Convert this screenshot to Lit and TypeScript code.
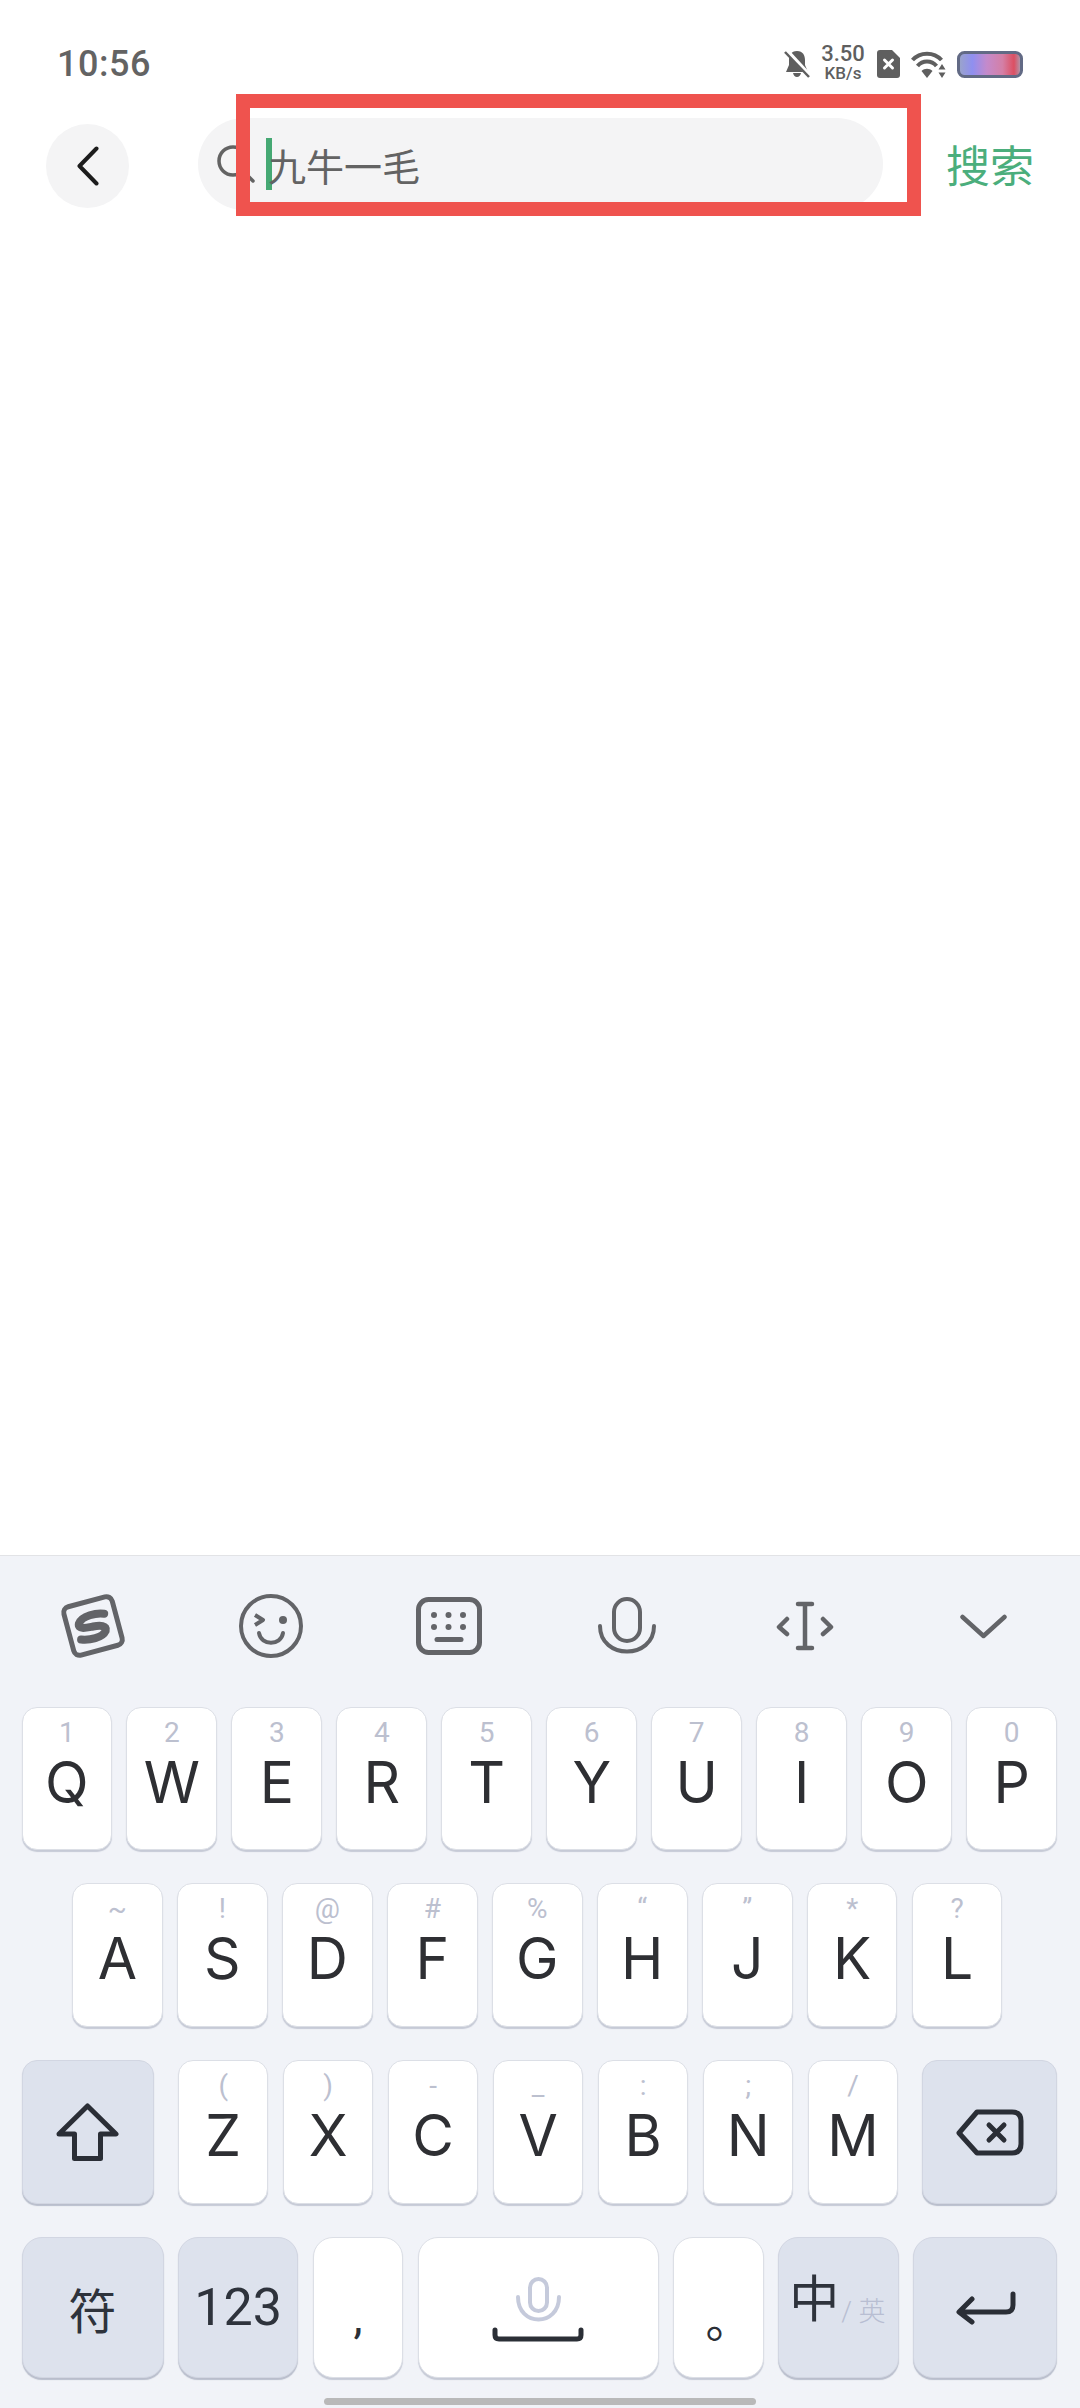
import { LitElement, html, css, svg } from "lit";
import { customElement } from "lit/decorators.js";

const ROW1 = [["Q", "1"], ["W", "2"], ["E", "3"], ["R", "4"], ["T", "5"], ["Y", "6"], ["U", "7"], ["I", "8"], ["O", "9"], ["P", "0"]];
const ROW2 = [["A", "~"], ["S", "!"], ["D", "@"], ["F", "#"], ["G", "%"], ["H", "“"], ["J", "”"], ["K", "*"], ["L", "?"]];
const ROW3 = [["Z", "("], ["X", ")"], ["C", "-"], ["V", "_"], ["B", ":"], ["N", ";"], ["M", "/"]];

const stroke = "#636468";

const icons = {
  logo: svg`<g transform="rotate(-15 33 33)"><rect x="8" y="8" width="50" height="50" rx="6" fill="none" stroke="${stroke}" stroke-width="5"/><path d="M47 24 C40 21 25 20 20 27 C17 33 27 33 33 33.500 C40 34 47 36 44 41 C39 47 26 46 18 43" fill="none" stroke="${stroke}" stroke-width="8" stroke-linecap="round"/></g>`,
  smile: svg`<circle cx="32" cy="32" r="30" fill="none" stroke="${stroke}" stroke-width="4"/><path d="M16 21 L24 26 L16 31" fill="none" stroke="${stroke}" stroke-width="4" stroke-linejoin="round"/><circle cx="44" cy="26" r="4" fill="${stroke}"/><path d="M20 39 C22 52 42 52 44 39" fill="none" stroke="${stroke}" stroke-width="4" stroke-linecap="round"/>`,
  board: svg`<rect x="2.500" y="2.500" width="61" height="53" rx="10" fill="none" stroke="${stroke}" stroke-width="5"/><g fill="${stroke}"><circle cx="18" cy="18" r="3"/><circle cx="32.500" cy="18" r="3"/><circle cx="47" cy="18" r="3"/><circle cx="18" cy="30" r="3"/><circle cx="32.500" cy="30" r="3"/><circle cx="47" cy="30" r="3"/></g><path d="M21 42.500 H45" stroke="${stroke}" stroke-width="5" stroke-linecap="round"/>`,
  mic: svg`<rect x="16" y="2" width="26" height="42" rx="13" fill="none" stroke="${stroke}" stroke-width="4"/><path d="M2 29 C2 63 56 63 56 29" fill="none" stroke="${stroke}" stroke-width="4" stroke-linecap="round"/>`,
  cursor: svg`<path d="M11 18 L3 26 L11 33 M47 18 L55 26 L47 33" fill="none" stroke="${stroke}" stroke-width="4.500" stroke-linecap="round" stroke-linejoin="round"/><path d="M22 3 H36 M29 3 V47 M22 47 H36" fill="none" stroke="${stroke}" stroke-width="4.500" stroke-linecap="round"/>`,
  down: svg`<path d="M2.500 3 L23.500 22 L44.500 3" fill="none" stroke="${stroke}" stroke-width="4.500" stroke-linecap="round" stroke-linejoin="round"/>`,
  shift: svg`<path d="M31.500 3 L60 31 H44.500 V55.500 H18.500 V31 H3 Z" fill="none" stroke="#2a2e36" stroke-width="5" stroke-linejoin="round"/>`,
  del: svg`<path d="M21 3 H56 Q65 3 65 12 V35 Q65 44 56 44 H21 L3 24 Z" fill="none" stroke="#2a2e36" stroke-width="5" stroke-linejoin="round"/><path d="M33 16 L48 31 M48 16 L33 31" stroke="#2a2e36" stroke-width="5" stroke-linecap="round"/>`,
  enter: svg`<path d="M58 3 V14 Q58 21 51 21 H5 M17 8 L4 21 L17 31" fill="none" stroke="#2a2e36" stroke-width="5" stroke-linecap="round" stroke-linejoin="round"/>`,
  spaceMic: svg`<rect x="14" y="2" width="17" height="32" rx="8.500" fill="none" stroke="#c5cadb" stroke-width="4"/><path d="M2 20 C2 50 43 50 43 20" fill="none" stroke="#c5cadb" stroke-width="4" stroke-linecap="round"/>`,
  spaceBar: svg`<path d="M3 3 V8 Q3 12 7 12 H85 Q89 12 89 8 V3" fill="none" stroke="#2b2f36" stroke-width="5" stroke-linecap="round"/>`,
};

@customElement("app-root")
export class AppRoot extends LitElement {
  static styles = css`
    :host {
      display: block;
      font-family: Roboto, "Noto Sans CJK SC", sans-serif;
    }
    .page {
      position: relative;
      width: 1080px;
      height: 2408px;
      background: #fff;
      display: flex;
      flex-direction: column;
      overflow: hidden;
    }
    .status {
      height: 60px;
      margin-top: 34px;
      padding: 0 57px;
      display: flex;
      align-items: center;
      justify-content: space-between;
      flex-shrink: 0;
    }
    .time {
      font-size: 36px;
      font-weight: 500;
      color: #636363;
      letter-spacing: 0.5px;
    }
    .sys {
      display: flex;
      align-items: center;
      color: #5f5f5f;
    }
    .sys svg {
      display: block;
    }
    .speed {
      width: 42px;
      margin: -3px 13px 0 12px;
      display: flex;
      flex-direction: column;
      align-items: center;
    }
    .speed b {
      font-size: 22px;
      font-weight: 500;
      line-height: 21px;
      white-space: nowrap;
    }
    .speed i {
      font-size: 17px;
      font-style: normal;
      font-weight: 500;
      line-height: 19px;
      white-space: nowrap;
    }
    .wifi {
      margin: 0 11px;
    }
    .head {
      height: 92px;
      margin-top: 24px;
      padding-left: 46px;
      display: flex;
      align-items: center;
      flex-shrink: 0;
    }
    .back {
      width: 83px;
      height: 84px;
      margin-top: 4px;
      border-radius: 50%;
      background: #f4f4f5;
      display: flex;
      align-items: center;
      justify-content: center;
    }
    .pill {
      width: 685px;
      height: 92px;
      margin-left: 69px;
      padding-left: 19px;
      box-sizing: border-box;
      border-radius: 46px;
      background: #f4f4f5;
      display: flex;
      align-items: center;
    }
    .pill svg {
      flex-shrink: 0;
    }
    .caret {
      width: 6px;
      height: 52px;
      margin-left: 11px;
      background: #45a873;
      flex-shrink: 0;
    }
    .query {
      margin-left: -4px;
      font-size: 38px;
      font-weight: 400;
      color: #636363;
      white-space: nowrap;
    }
    .go {
      margin-left: 63px;
      font-size: 44px;
      font-weight: 400;
      color: #4bae7c;
      white-space: nowrap;
    }
    .mark {
      position: absolute;
      left: 236px;
      top: 94px;
      width: 685px;
      height: 122px;
      box-sizing: border-box;
      border: 14px solid #ef534e;
    }
    .spacer {
      flex: 1;
    }
    .kb {
      height: 853px;
      box-sizing: border-box;
      flex-shrink: 0;
      background: #f1f3f8;
      border-top: 1px solid #e2e3e6;
      display: flex;
      flex-direction: column;
    }
    .tools {
      height: 140px;
      padding-left: 4px;
      margin-bottom: 11px;
      display: grid;
      grid-template-columns: repeat(6, 178px);
      align-items: center;
      justify-items: center;
      flex-shrink: 0;
    }
    .tools svg {
      display: block;
    }
    .rows {
      display: flex;
      flex-direction: column;
      gap: 33px;
    }
    .row {
      display: flex;
      gap: 14.400px;
      height: 143px;
      padding-left: 21.500px;
    }
    .row.r2 {
      height: 144px;
      padding-left: 72px;
    }
    .row.r3 {
      height: 144px;
    }
    .row.r4 {
      height: 141px;
    }
    .key {
      width: 90.600px;
      height: 100%;
      box-sizing: border-box;
      flex-shrink: 0;
      background: #fff;
      border: 1px solid #dcdfe6;
      border-radius: 15px;
      box-shadow: 0 2px 1px #c6cad6;
      display: flex;
      flex-direction: column;
      align-items: center;
      color: #2e2f33;
    }
    .hint {
      height: 32px;
      margin-top: 9px;
      font-size: 28px;
      line-height: 32px;
      font-weight: 400;
      color: #bcc0cf;
    }
    .cap {
      height: 60px;
      margin-top: 4px;
      font-family: Inter, Roboto, sans-serif;
      font-size: 57px;
      line-height: 60px;
    }
    .fn {
      background: #dde2ed;
      border-color: #d2d6e2;
      box-shadow: 0 2px 1px #b9becc;
      justify-content: center;
      color: #2e333c;
      font-size: 48px;
    }
    .r4 .key {
      border-radius: 20px;
    }
    .gapped {
      margin-right: 10px;
    }
    .shift {
      width: 132px;
    }
    .del {
      width: 135px;
      margin-left: 9.500px;
    }
    .sym {
      width: 142px;
    }
    .num {
      width: 120.500px;
      font-size: 52px;
    }
    .space {
      width: 241px;
      justify-content: flex-start;
      padding-top: 39px;
      gap: 4px;
    }
    .comma {
      justify-content: flex-start;
      padding-top: 52px;
      font-size: 46px;
      line-height: 54px;
      color: #2b2f36;
    }
    .stop {
      justify-content: flex-start;
      padding: 56px 0 0 20px;
      font-size: 46px;
      line-height: 54px;
      color: #2b2f36;
    }
    .lang {
      width: 120.500px;
      flex-direction: row;
      align-items: baseline;
      padding: 30px 0 0 10px;
      justify-content: flex-start;
      font-size: 50px;
      line-height: 64px;
    }
    .lang small {
      margin-left: 2px;
      font-size: 27px;
      font-weight: 300;
      color: #b8bed2;
      white-space: nowrap;
      transform: translateY(4px);
    }
    .enter {
      width: 144px;
    }
    .bar {
      width: 432px;
      height: 7px;
      margin: 20px auto 0;
      border-radius: 4px;
      background: #b9b9b9;
    }
  `;

  letter(k: string[]) {
    return html`<div class="key"><span class="hint">${k[1]}</span><span class="cap">${k[0]}</span></div>`;
  }

  icon(body: unknown, w: number, h: number) {
    return html`<svg width=${w} height=${h} viewBox="0 0 ${w} ${h}">${body}</svg>`;
  }

  render() {
    return html`
      <div class="page">
        <div class="status">
          <span class="time">10:56</span>
          <div class="sys">
            <svg width="26" height="28" viewBox="0 0 26 28">
              <path d="M13 1 C7 1 5 5.500 5 10 V15 L2 22 H24 L21 15 V10 C21 5.500 19 1 13 1Z M9 23 H17 Q16 27 13 27 Q10 27 9 23Z" fill="#5f5f5f" />
              <path d="M2 0 L25 25" stroke="#fff" stroke-width="4.500" />
              <path d="M1 2 L25 27" stroke="#5f5f5f" stroke-width="2.500" />
            </svg>
            <div class="speed"><b>3.50</b><i>KB/s</i></div>
            <svg width="23" height="28" viewBox="0 0 23 28">
              <path d="M3 0 H15 L23 8 V25 Q23 28 20 28 H3 Q0 28 0 25 V3 Q0 0 3 0Z" fill="#5f5f5f" />
              <path d="M7.500 10 L15.500 18 M15.500 10 L7.500 18" stroke="#fff" stroke-width="3" stroke-linecap="round" />
            </svg>
            <svg class="wifi" width="35" height="27" viewBox="0 0 35 27">
              <path d="M1.500 9 C9 0.500 23 0.500 30.500 9 M6.500 15 C11.500 9 20.500 9 25.500 15" fill="none" stroke="#5f5f5f" stroke-width="4" />
              <path d="M10.500 20 C13.500 17 18.500 17 21.500 20 L16 27Z" fill="#5f5f5f" />
              <path d="M31 13 L34.500 18.500 H27.500Z M31 27 L27.500 21.500 H34.500Z" fill="#5f5f5f" />
            </svg>
            <svg width="66" height="27" viewBox="0 0 66 27">
              <defs>
                <linearGradient id="cell">
                  <stop offset="0" stop-color="#9ba5c8" />
                  <stop offset="0.22" stop-color="#8f8ff0" />
                  <stop offset="0.45" stop-color="#c48acb" />
                  <stop offset="0.7" stop-color="#d47fa6" />
                  <stop offset="0.88" stop-color="#dc4f62" />
                  <stop offset="1" stop-color="#a9a3b8" />
                </linearGradient>
              </defs>
              <rect x="1.500" y="1.500" width="63" height="24" rx="6" fill="url(#cell)" stroke="#626a85" stroke-width="3" />
            </svg>
          </div>
        </div>
        <div class="head">
          <div class="back">
            <svg width="24" height="40" viewBox="0 0 24 40">
              <path d="M20.500 2.500 L3.500 20 L20.500 37.500" fill="none" stroke="#1c1c1c" stroke-width="4" stroke-linecap="round" stroke-linejoin="round" />
            </svg>
          </div>
          <div class="pill">
            <svg width="38" height="38" viewBox="0 0 38 38">
              <circle cx="16" cy="16" r="14" fill="none" stroke="#636363" stroke-width="3.500" />
              <path d="M27 27 L36 36" stroke="#636363" stroke-width="3.500" stroke-linecap="round" />
            </svg>
            <div class="caret"></div>
            <span class="query">九牛一毛</span>
          </div>
          <span class="go">搜索</span>
        </div>
        <div class="spacer"></div>
        <div class="kb">
          <div class="tools">
            ${this.icon(icons.logo, 66, 66)} ${this.icon(icons.smile, 64, 64)} ${this.icon(icons.board, 66, 58)}
            ${this.icon(icons.mic, 58, 58)} ${this.icon(icons.cursor, 58, 50)} ${this.icon(icons.down, 47, 25)}
          </div>
          <div class="rows">
            <div class="row">${ROW1.map((k) => this.letter(k))}</div>
            <div class="row r2">${ROW2.map((k) => this.letter(k))}</div>
            <div class="row r3">
              <div class="key fn shift gapped">${this.icon(icons.shift, 63, 58)}</div>
              ${ROW3.map((k) => this.letter(k))}
              <div class="key fn del">${this.icon(icons.del, 68, 47)}</div>
            </div>
            <div class="row r4">
              <div class="key fn sym">符</div>
              <div class="key fn num">123</div>
              <div class="key comma">,</div>
              <div class="key space">${this.icon(icons.spaceMic, 45, 46)} ${this.icon(icons.spaceBar, 92, 15)}</div>
              <div class="key stop">。</div>
              <div class="key fn lang">中<small>/ 英</small></div>
              <div class="key fn enter">${this.icon(icons.enter, 61, 34)}</div>
            </div>
          </div>
          <div class="bar"></div>
        </div>
        <div class="mark"></div>
      </div>
    `;
  }
}
